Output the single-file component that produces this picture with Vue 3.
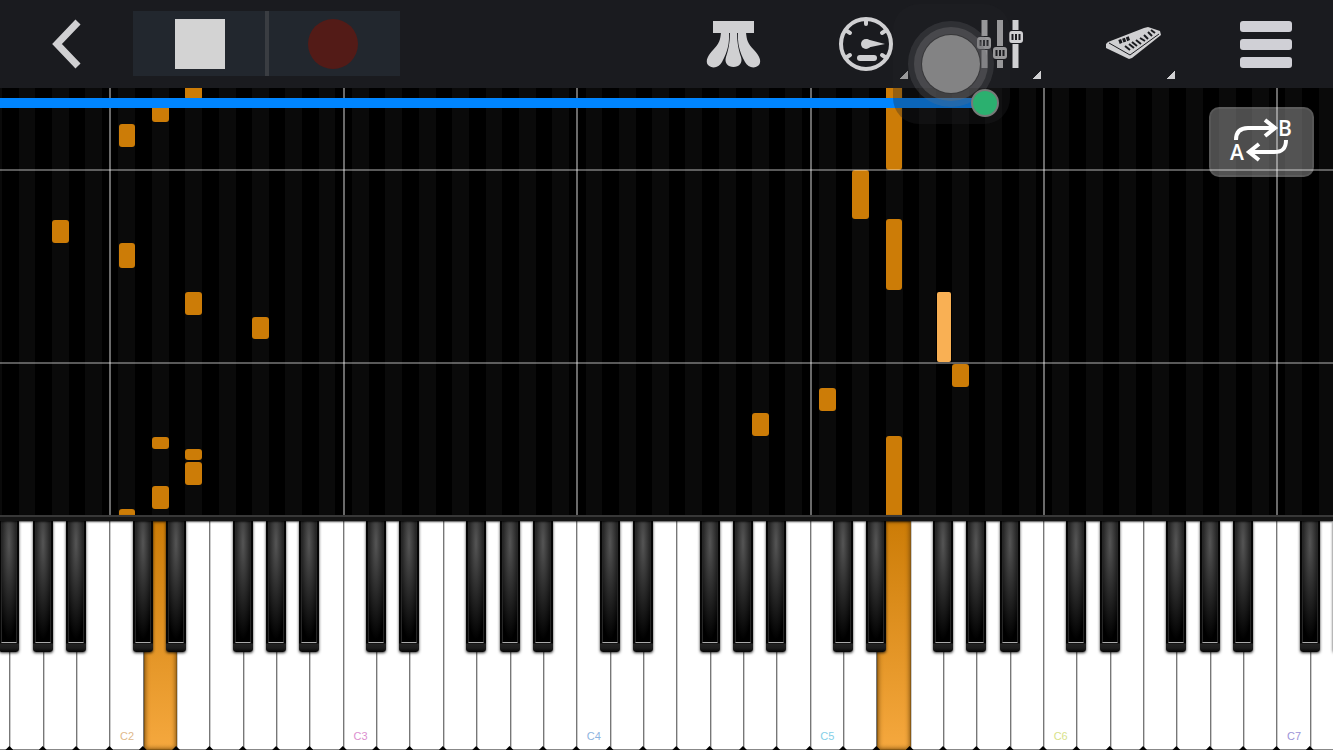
<template>
  <main class="player">
    <header class="toolbar">
      <button type="button" class="tool" aria-label="Back">
        <svg width="34" height="54" viewBox="0 0 34 54">
          <path d="M28 5 L7 27 L28 49" fill="none" stroke="#d0d0d2" stroke-width="7" />
        </svg>
      </button>
      <button type="button" class="tool transport" aria-label="Stop">
        <span class="stop-icon"></span>
      </button>
      <button type="button" class="tool transport record" aria-label="Record">
        <span class="record-icon"></span>
      </button>
      <button type="button" class="tool strings" aria-label="Falling notes">
        <svg width="57" height="50" viewBox="0 0 57 50">
          <g fill="#d0d0d2">
            <path d="M8 2H49V14H8Z" />
            <path d="M16 13H24C24.5 24 23 32 17 43C14 49 7 50 3 46C0 42 3 36 8 31C14 25 15.5 21 16 13Z" />
            <path d="M25 13H32C32 25 34 32 36 38C38 44 34 48 28.5 48C23 48 19 44 21 38C23 32 25 25 25 13Z" />
            <path d="M41 13H33C32.5 24 34 32 40 43C43 49 50 50 54 46C57 42 54 36 49 31C43 25 41.5 21 41 13Z" />
          </g>
        </svg>
      </button>
      <button type="button" class="tool" aria-label="Tempo">
        <svg width="56" height="56" viewBox="0 0 56 56">
          <circle cx="28" cy="28" r="25" fill="none" stroke="#d0d0d2" stroke-width="4" />
          <g stroke="#d0d0d2" stroke-width="4" stroke-linecap="round">
            <path d="M28 4V8M9 15L12 17M47 15L44 17M9 41L12 39M47 41L44 39" />
            <path d="M22 42H36" stroke-width="6" />
          </g>
          <circle cx="28" cy="28" r="5" fill="#d0d0d2" />
          <path d="M28 23L47 28L28 32Z" fill="#d0d0d2" />
        </svg>
        <span class="corner"></span>
      </button>
      <button type="button" class="tool" aria-label="Mixer">
        <svg width="48" height="50" viewBox="0 0 48 50">
          <path d="M8.5 1V49M24 1V49M39.5 1V49" stroke="#d0d0d2" stroke-width="6" />
          <g v-for="knob in knobs" :key="knob.x">
            <rect :x="knob.x" :y="knob.y" width="16" height="14" rx="3" fill="#1a1b1f" />
            <rect :x="knob.x + 1" :y="knob.y + 1" width="14" height="12" rx="3" fill="#d0d0d2" />
            <path
              :d="`M${knob.x + 4.5} ${knob.y + 4}v6m3.5 -6v6m3.5 -6v6`"
              stroke="#1a1b1f"
              stroke-width="2"
            />
          </g>
        </svg>
        <span class="corner"></span>
      </button>
      <button type="button" class="tool" aria-label="Instrument">
        <svg width="56" height="34" viewBox="0 0 56 34">
          <path d="M1 17L3 15L39 1L43 0L55 4L56 8L27 31L24 32L1 21Z" fill="#d0d0d2" />
          <path d="M4 16L25 28L54 7" fill="none" stroke="#1a1b1f" stroke-width="1" />
          <path d="M14 15L25 11" stroke="#1a1b1f" stroke-width="4" stroke-dasharray="3 1" />
          <path
            d="M20 19L25 23M24 17L29 21M27 15L32 19M31 13L36 17M35 11L40 14M39 8L43 12M43 5L47 9M46 3L50 6"
            stroke="#1a1b1f"
            stroke-width="2"
          />
        </svg>
        <span class="corner"></span>
      </button>
      <button type="button" class="tool" aria-label="Menu">
        <span class="menu-icon"><i></i><i></i><i></i></span>
      </button>
    </header>

    <section class="roll" aria-label="Piano roll">
      <div class="lanes">
        <div v-for="key in keys" :key="key.index" class="lane" :class="{ octave: key.name === 'C' }">
          <span
            v-for="note in notesFor(key.index)"
            :key="note.top"
            class="note"
            :class="{ sharp: note.sharp }"
            :style="{ top: note.top + 'px', height: note.length + 'px' }"
          ></span>
        </div>
      </div>
      <span v-for="y in measures" :key="y" class="measure" :style="{ top: y + 'px' }"></span>
      <input
        v-model="position"
        class="seek"
        type="range"
        min="0"
        max="1000"
        aria-label="Song position"
        :style="{ '--played': position / 10 + '%' }"
      />
      <button type="button" class="loop" aria-label="Repeat A to B">
        <svg width="72" height="60" viewBox="-4 -5 72 60">
          <g fill="none" stroke="#fff" stroke-width="4">
            <path d="M6 23C6 15 10 11 18 11H45" />
            <path d="M35 3L45 11L35 19" />
            <path d="M56 23C56 32 52 35 44 35H18" />
            <path d="M29 27L19 35L29 43" />
          </g>
          <text x="0" y="43">A</text>
          <text x="48" y="19">B</text>
        </svg>
      </button>
    </section>

    <div class="rail"></div>

    <section class="keyboard" aria-label="Keyboard">
      <div class="keys">
        <div v-for="key in keys" :key="key.index" class="key" :class="{ pressed: pressed.includes(key.index) }">
          <span v-if="key.label" class="key-label" :style="{ color: key.color }">{{ key.label }}</span>
          <span v-if="key.hasSharp" class="black-key"><span class="black-top"></span></span>
        </div>
      </div>
    </section>

    <div class="touch">
      <span class="touch-button"></span>
      <span class="touch-dot"></span>
    </div>
  </main>
</template>

<script setup>
import { ref } from 'vue'

const position = ref(739)
const pressed = [5, 27]
const measures = [81, 274]

const names = ['F', 'G', 'A', 'B', 'C', 'D', 'E']
const labelColors = ['#dfb98a', '#dc8fd0', '#8eb4e0', '#85cfe8', '#d8e28a', '#9c94d8']

// 41 white keys, the first one is cut off by the left edge
const keys = Array.from({ length: 41 }, (_, index) => {
  const name = names[index % 7]
  const octave = Math.floor((index - 4) / 7)
  return {
    index,
    name,
    label: name === 'C' ? 'C' + (octave + 2) : '',
    color: labelColors[octave],
    hasSharp: name !== 'B' && name !== 'E'
  }
})

const notes = [
  { key: 2, top: 132, length: 23 },
  { key: 4, top: 36, length: 23 },
  { key: 4, top: 155, length: 25 },
  { key: 4, top: 421, length: 20 },
  { key: 5, top: 11, length: 23 },
  { key: 5, top: 349, length: 12 },
  { key: 5, top: 398, length: 23 },
  { key: 6, top: -10, length: 22 },
  { key: 6, top: 204, length: 23 },
  { key: 6, top: 361, length: 11 },
  { key: 6, top: 374, length: 23 },
  { key: 8, top: 229, length: 22 },
  { key: 23, top: 325, length: 23 },
  { key: 25, top: 300, length: 23 },
  { key: 26, top: 82, length: 49 },
  { key: 27, top: -10, length: 92 },
  { key: 27, top: 131, length: 71 },
  { key: 27, top: 348, length: 90 },
  { key: 28, top: 204, length: 70, sharp: true },
  { key: 29, top: 276, length: 23 }
]

const knobs = [
  { x: 0, y: 17 },
  { x: 16, y: 27 },
  { x: 32, y: 11 }
]

function notesFor(index) {
  return notes.filter(note => note.key === index)
}
</script>

<style>
body {
  margin: 0;
  background: #000;
}
</style>

<style scoped>
.player {
  position: relative;
  display: flex;
  flex-direction: column;
  height: 100vh;
  overflow: hidden;
  background: #000;
  font-family: "Liberation Sans", Arial, sans-serif;
}
.toolbar {
  display: grid;
  grid-template-columns: repeat(10, 1fr);
  height: 88px;
  flex: none;
  background: #1a1b1f;
}
.tool {
  position: relative;
  display: flex;
  align-items: center;
  justify-content: center;
  padding: 0;
  border: none;
  background: none;
  cursor: pointer;
}
.transport {
  height: 65px;
  margin-top: 11px;
  background: #22272e;
}
.record::before {
  content: "";
  position: absolute;
  top: 0;
  bottom: 0;
  left: -2px;
  width: 4px;
  background: #3a3d42;
}
.stop-icon {
  width: 50px;
  height: 50px;
  background: #d3d3d3;
}
.record-icon {
  width: 50px;
  height: 50px;
  border-radius: 50%;
  background: #531b17;
}
.strings {
  grid-column: 6;
}
.corner {
  position: absolute;
  right: 25px;
  bottom: 9px;
  width: 8px;
  height: 8px;
  background: linear-gradient(135deg, transparent 50%, #d0d0d2 50%);
}
.menu-icon {
  display: flex;
  flex-direction: column;
  gap: 7px;
}
.menu-icon i {
  width: 52px;
  height: 11px;
  border-radius: 3px;
  background: #d0d0d6;
}
.roll {
  position: relative;
  flex: 1;
  min-height: 0;
  overflow: hidden;
}
.lanes,
.keys {
  display: flex;
  height: 100%;
  margin-left: -1.725%;
  margin-right: -1.8%;
}
.lane,
.key {
  position: relative;
  box-sizing: border-box;
  flex: 0 0 2.502vw;
}
.lane {
  background: linear-gradient(90deg, transparent 25%, #0a0a0a 25%, #0a0a0a 75%, transparent 75%);
}
.lane.octave::before {
  content: "";
  position: absolute;
  top: 0;
  bottom: 0;
  left: -1px;
  width: 2px;
  background: #6a6a6a;
}
.note {
  position: absolute;
  left: 25%;
  width: 50%;
  border-radius: 3px;
  background: #cc7c07;
}
.note.sharp {
  left: 80%;
  width: 40%;
  z-index: 1;
  border-radius: 2px;
  background: #f9b054;
}
.measure {
  position: absolute;
  left: 0;
  right: 0;
  height: 2px;
  background: rgba(255, 255, 255, 0.35);
}
.seek {
  position: absolute;
  top: 10px;
  left: 0;
  width: 100%;
  height: 10px;
  margin: 0;
  appearance: none;
  background: linear-gradient(#0085ff, #0085ff) no-repeat 0 0 / var(--played) 100%;
}
.seek::-webkit-slider-thumb {
  appearance: none;
  width: 10px;
  height: 10px;
  background: transparent;
}
.loop {
  position: absolute;
  top: 19px;
  right: 19px;
  display: flex;
  align-items: center;
  justify-content: center;
  width: 105px;
  height: 70px;
  padding: 0;
  border: 2px solid rgba(255, 255, 255, 0.06);
  border-radius: 10px;
  background: rgba(255, 255, 255, 0.3);
  cursor: pointer;
}
.loop text {
  fill: #fff;
  font-family: "Open Sans", "Noto Sans", sans-serif;
  font-size: 21px;
  font-weight: 600;
}
.rail {
  position: relative;
  z-index: 2;
  flex: none;
  box-sizing: border-box;
  height: 6px;
  margin-top: -1px;
  border-top: 2px solid #383838;
  background: #151515;
  box-shadow: 0 1px 2px rgba(0, 0, 0, 0.7);
}
.keyboard {
  flex: none;
  height: 229px;
  overflow: hidden;
  background: #fff;
}
.key {
  display: flex;
  align-items: flex-end;
  justify-content: center;
  padding-bottom: 8px;
  border-right: 1px solid #777;
  border-left: 1px solid #ccc;
  border-bottom: 1px solid #888;
  background: #fff;
}
.key::after {
  content: "";
  position: absolute;
  right: -4px;
  bottom: -1px;
  z-index: 1;
  width: 8px;
  height: 4px;
  background: #000;
  clip-path: polygon(50% 0, 100% 100%, 0 100%);
}
.key.pressed {
  border-color: #8a5a14;
  background: linear-gradient(#cc7c07, #f5a83e);
  box-shadow: inset 0 0 5px #6b4208;
}
.key-label {
  font-size: 11px;
  line-height: 10px;
}
.black-key {
  position: absolute;
  top: 0;
  right: -10px;
  z-index: 1;
  box-sizing: border-box;
  width: 20px;
  height: 131px;
  padding: 0 2px 9px;
  border-radius: 0 0 3px 3px;
  background: linear-gradient(#050505 93%, #222 94%, #1c1c1c 97%, #050505);
  box-shadow: 0 1px 3px rgba(0, 0, 0, 0.8);
}
.black-top {
  display: block;
  box-sizing: border-box;
  height: 100%;
  border: 1px solid #262626;
  border-top: none;
  border-bottom: 1px solid #aaa;
  background: radial-gradient(ellipse 90% 80% at 50% 18%, #555, #000);
}
.touch {
  position: absolute;
  top: 4px;
  left: 67%;
  z-index: 3;
  width: 117px;
  height: 120px;
  border-radius: 26px;
  background: rgba(34, 34, 38, 0.32);
  pointer-events: none;
}
.touch-button {
  position: absolute;
  top: 31px;
  left: 29px;
  width: 58px;
  height: 58px;
  border-radius: 50%;
  background: #838384;
  box-shadow: 0 0 0 1px #38383a, 0 0 0 8px rgba(110, 110, 112, 0.4), 0 0 0 14px rgba(120, 120, 124, 0.22);
}
.touch-dot {
  position: absolute;
  right: 11px;
  bottom: 7px;
  width: 24px;
  height: 24px;
  border: 2px solid #777a78;
  border-radius: 50%;
  background: #2bb06f;
}
</style>
